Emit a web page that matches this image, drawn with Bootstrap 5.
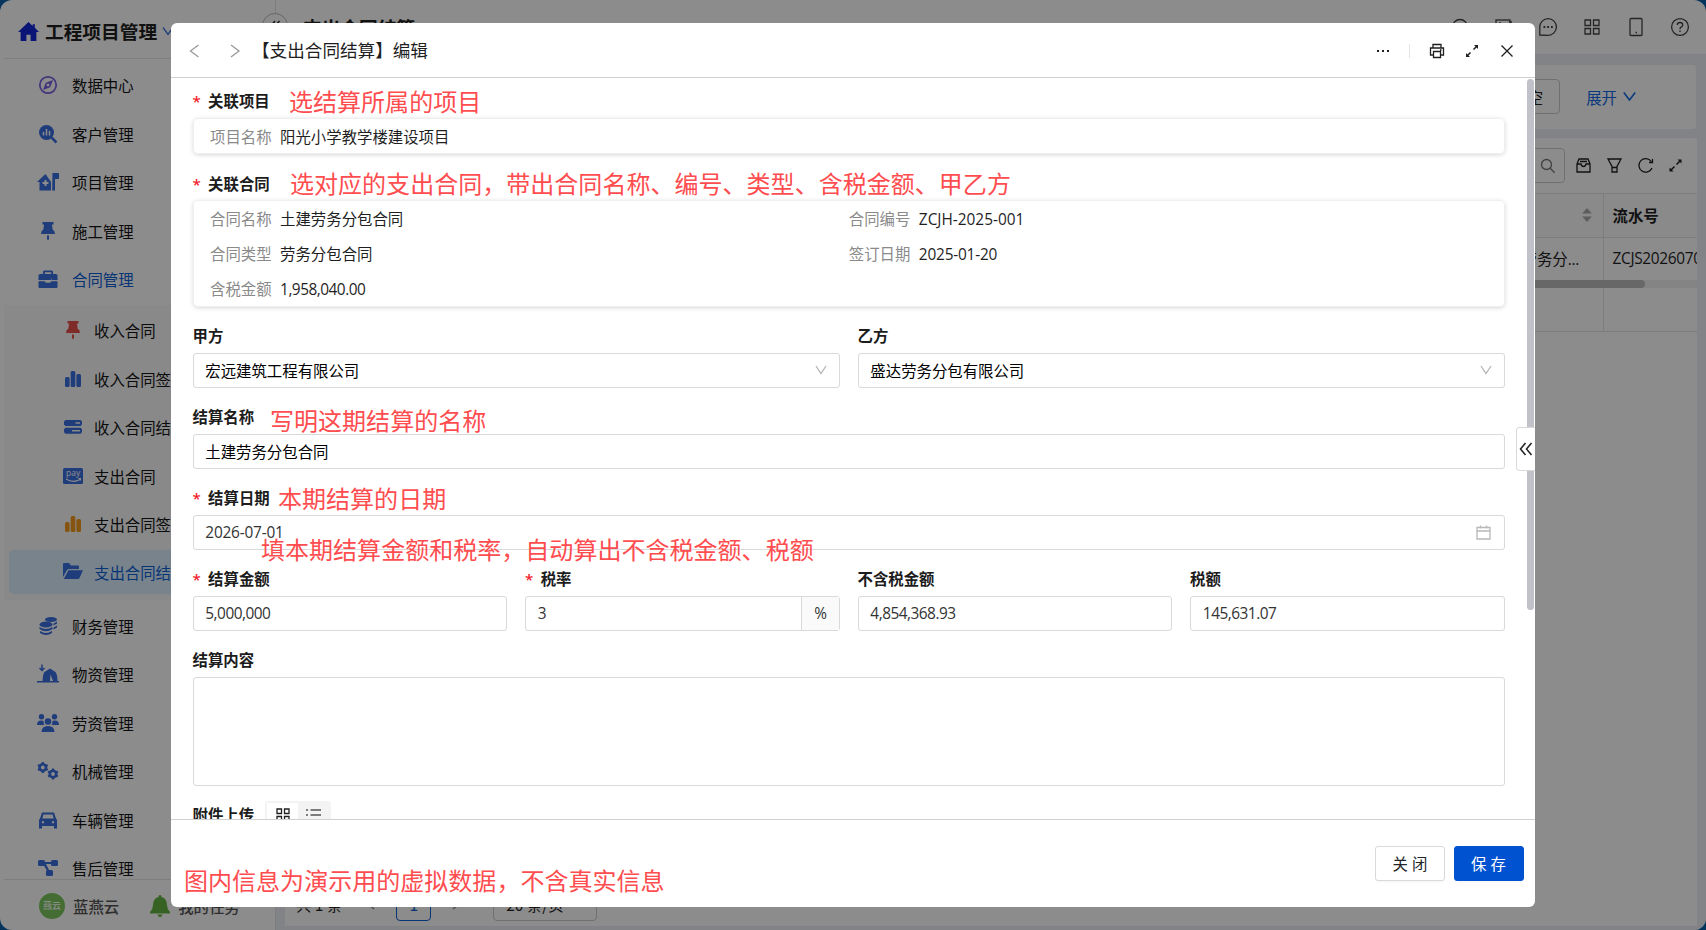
<!DOCTYPE html>
<html lang="zh-CN">
<head>
<meta charset="utf-8">
<meta name="viewport" content="width=device-width, initial-scale=1">
<title>工程项目管理</title>
<link href="https://cdn.jsdelivr.net/npm/bootstrap@5.3.0/dist/css/bootstrap.min.css" rel="stylesheet">
<style>
:root{--ui:"Open Sans","Noto Sans CJK SC",sans-serif}
html,body{height:100%}
body{margin:0;background:#0a5fa8;font-family:"Noto Sans CJK SC",sans-serif;font-size:15.4px;line-height:24px;color:#1f1f1f;overflow:hidden}
svg{display:block;flex:none;fill:none;stroke:currentColor;stroke-width:1.3}
svg.solid{fill:currentColor;stroke:none}
.lat{font-family:var(--ui);letter-spacing:-.5px}
.lat.date{letter-spacing:-.2px}
.lat.code{letter-spacing:0}
.app{height:930px;background:#fff;border-radius:12px;overflow:hidden}
.side{width:276px;border-right:1px solid #e4e4e8}
.brand{height:58.5px;border-bottom:1px solid #e6e6e6;margin-left:4px;padding:5px 0 0 14px;font-size:18.7px;font-weight:700;gap:6px}
.menu-list{height:820px;overflow:hidden;padding-top:2.500px}
.item{height:48.5px;padding-left:38px;gap:14px;color:#141414}
.item svg{width:20px;height:20px}
.blue{color:#3a6de0}
.submenu{background:#f9f9f9;margin:1.5px 0 2px 4px;padding:3.4px 0 0;height:294.5px}
.submenu .item{height:44px;margin:0 4px 4.4px 5px;padding-left:54px;gap:11px;border-radius:5px}
.submenu .item.sel{background:#dceffe;color:#0b5fd6}
.sidefoot{height:51px;border-top:1px solid #e6e6e6;margin-left:4px;padding:3px 0 0 35px;font-weight:500;color:#555}
.ava{width:26px;height:26px;border-radius:50%;background:#7ac75c;color:#fff;font-size:9px}
.topbar{height:54px;padding:0 16px 1px 27px}
.topbar .ttl{font-size:18.7px;font-weight:700}
.topicons{gap:24px;color:#444}
.topicons svg{width:20px;height:20px}
.fold{width:26px;height:26px;border:1px solid #bbb;border-radius:50%;left:262px;top:13px;background:#fff;z-index:1}
.work{background:#eceff5;height:876px;padding:11px 9px 4px 9px}
.filterbar{height:64px;margin-bottom:9px;background:#fff;border-radius:3px;padding-right:60px;margin-right:1px}
.ghost{border:1px solid #ccc;border-radius:4px;height:35px;background:#fff}
.filterbar .ghost{margin-bottom:1px}
.tbl{height:788px;background:#fff;position:relative}
.toolbar{height:55px;gap:12.4px;padding-right:13px}
.gridrow{border-top:1px solid #e4e4e4}
.gridrow>div:last-child{width:94px;border-left:1px solid #e4e4e4;padding-left:8.5px;overflow:hidden;white-space:nowrap}
.hbar{height:8px;background:#f0f0f0}
.hbar>div{height:8px;background:#bcbcbc;border-radius:4px;width:1360px}
.pager{margin-top:auto;height:35px;margin-bottom:5px;padding-left:11px}
.shade{inset:0;background:rgba(0,0,0,.45);z-index:5}
.dlg{left:171px;top:23px;width:1364px;height:884px;background:#fff;border-radius:6px;z-index:6;overflow:hidden}
.dlg-head{height:55px;border-bottom:1px solid #d0d0d0;padding:1px 20px 0 14px}
.dlg-title{font-size:17.6px;margin-left:8px;margin-top:-1px}
.dlg-body{height:741px;padding:7px 30px 0 21.5px;overflow:hidden}
.dlg-foot{height:88px;border-top:1px solid #d0d0d0;padding:0 11.5px 0 0;gap:8.5px}
.lbl{height:33px;line-height:31px;font-weight:600;font-size:15.4px;color:#1c1c1c;white-space:nowrap}
.req::before{content:"*";color:#f5222d;font-family:"Open Sans",sans-serif;font-weight:600;margin-right:7.4px;font-size:15px;letter-spacing:0}
.box1{border-radius:5px;border:1px solid #efefef;box-shadow:0 1px 4px rgba(0,0,0,.16);padding:0 16.5px;margin-bottom:13px}
.box1 .k{color:#8a8a8a;margin-right:8.500px}
.info>div{height:35.300px;overflow:hidden;line-height:34.400px}
.ant{height:35.3px;border:1px solid #d9d9d9;border-radius:3px;padding:0 11.8px;color:#000;margin-bottom:12.9px}
.ant.lat{color:#333}
.ant:not(.lat){padding-bottom:1px}
.fgrid{display:grid;column-gap:17.6px}
.g2{grid-template-columns:1fr 1fr}.g4{grid-template-columns:repeat(4,1fr)}
.pct{width:38px;height:33.3px;border-left:1px solid #d9d9d9;background:#fafafa;margin-right:-11.8px}
.seg{background:#f3f3f3;border-radius:3px;padding:2px;width:66px;height:32px;margin-top:2px}
.btn.x{height:35.2px;width:70px;padding:0;font-size:15.4px;border-radius:3px;letter-spacing:4px;text-indent:4px;border-color:#d9d9d9;box-shadow:0 2px 0 rgba(0,0,0,.02)}
.btn.x.p{background:#0052d0;border-color:#0052d0;color:#fff}
.note{color:#ff4d4f;font-size:24.04px;line-height:34px;white-space:nowrap;z-index:8}
.vbar{left:1356px;top:56px;width:7px;height:531px;border-radius:4px;background:#c1c2c9}
.pull{left:1345px;top:404px;width:20px;height:44px;background:#fff;border:1px solid #d9d9d9;border-radius:3px 0 0 3px}
</style>
</head>
<body>
<div class="app d-flex position-relative">
  <aside class="side flex-shrink-0">
    <div class="brand d-flex align-items-center">
      <svg class="solid" width="21" height="21" viewBox="0 0 20 20" style="color:#1527d8"><path d="M10 1 0 10.5h2.5V19H8v-6h4v6h5.5v-8.500H20L16 6.500V3h-2v1.800z"/></svg>
      <span>工程项目管理</span>
      <svg width="12" height="12" viewBox="0 0 12 12" class="blue" style="margin-left:-1px"><path d="m1 2.500 5 7 5-7"/></svg>
    </div>
    <div class="menu-list">
      <div class="item d-flex align-items-center"><svg viewBox="0 0 20 20" style="color:#7a5fe0"><circle cx="10" cy="10" r="8.200" stroke-width="1.700"/><path fill="currentColor" fill-rule="evenodd" stroke="none" d="m15 5-2.800 7.200L5 15l2.800-7.200zM10 8.600a1.400 1.400 0 1 0 .01 0z"/></svg>数据中心</div>
      <div class="item d-flex align-items-center"><svg class="blue" viewBox="0 0 20 20"><circle cx="8.500" cy="8.500" r="7.500" fill="currentColor" stroke="none"/><path d="m13.500 13.500 5 5" stroke-width="2.500"/><path d="M5.500 8v3.500M8.500 5v6.500M11.500 7v4.500" stroke="#fff" stroke-width="1.500"/></svg>客户管理</div>
      <div class="item d-flex align-items-center"><svg class="blue solid" viewBox="0 0 22 20" style="width:22px;height:20px;margin:0 -1px"><path fill-rule="evenodd" d="M8.500 2 0 10h2.500v8.500H14V10zM7.500 8h2v2h2v2h-2v2h-2v-2h-2v-2h2z"/><path d="M15.500 1H22v6h-4v11.500H15.200z"/></svg>项目管理</div>
      <div class="item d-flex align-items-center"><svg class="blue solid" viewBox="0 0 20 20"><path d="M4.500 1h11v2.500h-1.500l.6 5q2.400 1 2.400 4.500H3q0-3.500 2.400-4.500l.6-5H4.500zM9 14.500h2v3.500l-1 1.500-1-1.500z"/></svg>施工管理</div>
      <div class="item d-flex align-items-center" style="color:#0b5fd6"><svg class="blue solid" viewBox="0 0 20 20"><path fill-rule="evenodd" d="M6 1.500h8l1 1V5h3l1.500 1v5h-6V9.500H13v1.500H7V11H.5V6L2 5h3V2.500zM6.800 3.300V5h6.400V3.300z"/><path d="M.5 12.300h6l1.500 1.500h4l1.500-1.500h6V18q0 1-1 1H1.500q-1 0-1-1z"/></svg>合同管理</div>
      <div class="submenu">
        <div class="item d-flex align-items-center"><svg class="solid" style="color:#e8504c" viewBox="0 0 20 20"><path d="M4.500 1h11v2.500h-1.500l.6 5q2.400 1 2.400 4.500H3q0-3.500 2.400-4.500l.6-5H4.500zM9 14.500h2v3.500l-1 1.500-1-1.500z"/></svg>收入合同</div>
        <div class="item d-flex align-items-center"><svg class="blue solid" viewBox="0 0 20 20"><rect x="2" y="8" width="4.600" height="10" rx="1.500"/><rect x="7.700" y="2" width="4.600" height="16" rx="1.500"/><rect x="13.400" y="5" width="4.600" height="13" rx="1.500"/></svg>收入合同签</div>
        <div class="item d-flex align-items-center"><svg class="blue solid" viewBox="0 0 20 20"><path fill-rule="evenodd" d="M2.500 3h15L19 4.500v3L17.500 9h-15L1 7.500v-3zM12.500 5.200v1.600H17V5.200zM2.500 10.800h15l1.500 1.500v3l-1.500 1.500h-15L1 15.300v-3zM9 13v1.600h8V13z"/></svg>收入合同结</div>
        <div class="item d-flex align-items-center"><svg class="blue" viewBox="0 0 20 20"><rect x="0" y="2" width="20" height="16" rx="1.500" fill="currentColor" stroke="none"/><path d="M3 13q7 4.500 14 .5M15.500 12.500h2v2" stroke="#fff" stroke-width="1.100"/><text x="3" y="10" font-size="8.500" fill="#fff" stroke="none" font-family="Open Sans,sans-serif">pay</text></svg>支出合同</div>
        <div class="item d-flex align-items-center"><svg class="solid" style="color:#f39a1c" viewBox="0 0 20 20"><rect x="2" y="8" width="4.600" height="10" rx="1.500"/><rect x="7.700" y="2" width="4.600" height="16" rx="1.500"/><rect x="13.400" y="5" width="4.600" height="13" rx="1.500"/></svg>支出合同签</div>
        <div class="item sel d-flex align-items-center"><svg class="blue solid" viewBox="0 0 20 20"><path d="M0 2q0-1 1-1h5l2 2.500h7q1 0 1 1V7H6q-1.500 0-2 1L0 15zM5.500 8.200H20L16.500 16q-.5 1-1.500 1H.8z"/></svg>支出合同结</div>
      </div>
      <div class="item d-flex align-items-center"><svg class="blue solid" viewBox="0 0 20 20"><ellipse cx="13" cy="3.500" rx="6" ry="2.600"/><ellipse cx="8" cy="8.500" rx="6.500" ry="3"/><path d="M1.500 11q6.500 4 13 0v2q-6.500 4.500-13 0zM2 15q6 4 12 0v2q-6 4-12 0zM15.500 7.500 19 5.500v2l-3.500 2zM15.500 11.500 19 9.500v2l-3.500 2z"/></svg>财务管理</div>
      <div class="item d-flex align-items-center"><svg class="blue" viewBox="-1 0 22 20" style="width:22px;height:20px;margin:0 -1px"><path d="M4 .5v6M1.500 4 4 6.500 6.500 4" stroke-width="1.500"/><path fill="currentColor" stroke="none" fill-rule="evenodd" d="M-1 17h5.500Q5 9 6.500 8L12 4.500 17.500 8q2 3 2 9H21v1.500H-1zM12.500 10.500 12 17h3z"/></svg>物资管理</div>
      <div class="item d-flex align-items-center"><svg class="blue solid" viewBox="-1 0 22 20" style="width:22px;height:20px;margin:0 -1px"><circle cx="3.500" cy="3.700" r="2.700"/><circle cx="16.500" cy="3.700" r="2.700"/><circle cx="10" cy="8.500" r="3.300"/><path d="M-1 12q0-4.500 4-4.500 2.500 0 2.700 1-.4 2 .8 3.500zM21 12q0-4.500-4-4.500-2.500 0-2.700 1 .4 2-.8 3.500zM3.500 19q0-6 6.500-6t6.500 6z"/></svg>劳资管理</div>
      <div class="item d-flex align-items-center"><svg class="blue" viewBox="-1 0 22 20" style="width:22px;height:20px;margin:0 -1px"><g stroke-width="2.600"><circle cx="4.800" cy="6.500" r="3.200"/><circle cx="15" cy="13" r="3.200"/></g><g stroke-width="2.200"><path d="M4.800 1v2M4.800 10v2M0 4l1.800 1M8 8l1.700 1M0 9l1.800-1M8 5l1.700-1M15 7.500v2M15 16.500v2M10.200 10.500l1.800 1M18 14.500l1.800 1M10.200 15.500l1.800-1M18 11.500l1.800-1"/></g></svg>机械管理</div>
      <div class="item d-flex align-items-center"><svg class="blue solid" viewBox="0 0 20 20"><path fill-rule="evenodd" d="M4 2.500h12l2 6 1 1.500v8.500h-3v-2.500H4v2.500H1V10l1-1.500zM5.500 4.500 4.300 8.500h11.400l-1.200-4zM5 11a1.200 1.200 0 1 0 .01 0zM15 11a1.200 1.200 0 1 0 .01 0z"/></svg>车辆管理</div>
      <div class="item d-flex align-items-center"><svg class="blue solid" viewBox="0 0 20 20"><rect x="0" y="2" width="7" height="6" rx="1.500"/><rect x="13" y="2" width="7" height="6" rx="1.500"/><rect x="8" y="12" width="7" height="6" rx="1.500"/><path d="M5 4h10v2H8l3.500 7-2 .5L5 6z"/></svg>售后管理</div>
    </div>
    <div class="sidefoot d-flex align-items-center">
      <div class="ava d-flex align-items-center justify-content-center">燕云</div><span style="margin-left:8px">蓝燕云</span>
      <svg class="solid" width="20" height="22" viewBox="0 0 20 22" style="color:#63b540;margin:0 8px 0 31px"><path d="M10 0q1.500 0 1.500 2Q17 3.500 17 10q0 4 3 7v1.500H0V17q3-3 3-7 0-6.500 5.500-8Q8.500 0 10 0zM7.500 19.500h5q-.5 2.500-2.500 2.500t-2.500-2.500z"/></svg>
      <span>我的任务</span>
    </div>
  </aside>
  <div class="fold position-absolute d-flex align-items-center justify-content-center"><svg width="12" height="12" viewBox="0 0 12 12"><path d="M6 1 1.500 6 6 11M10.500 1 6 6l4.500 5"/></svg></div>
  <main class="flex-grow-1" style="min-width:0">
    <div class="topbar d-flex align-items-center justify-content-between">
      <span class="ttl">支出合同结算</span>
      <div class="topicons d-flex">
        <svg viewBox="0 0 20 20"><circle cx="10" cy="10" r="7.500"/></svg>
        <svg viewBox="0 0 20 20"><rect x="2" y="3" width="14" height="14"/><path d="M5 6h2M15 5h3"/></svg>
        <svg viewBox="0 0 20 20"><path d="M1.800 18V10a8.300 8.300 0 1 1 8.300 8.300z"/><path d="M5.500 10h1.800M9.200 10H11M13 10h1.800" stroke-width="1.800"/></svg>
        <svg viewBox="0 0 20 20"><path d="M3 3h5.500v5.500H3zM11.500 3H17v5.500h-5.500zM3 11.500h5.500V17H3zM11.500 11.500H17V17h-5.500z"/></svg>
        <svg viewBox="0 0 20 20"><rect x="4" y="1.500" width="12" height="17" rx="1"/><path d="M9.500 15.500h1.500" stroke-width="1.600"/></svg>
        <svg viewBox="0 0 20 20"><circle cx="10" cy="10" r="8.400"/><path d="M7.300 8q0-2.500 2.700-2.500T12.700 8q0 1.500-1.700 2.200-1 .5-1 2M10 13.500v1.500"/></svg>
      </div>
    </div>
    <div class="work">
      <div class="filterbar d-flex align-items-center justify-content-end">
        <div class="ghost d-flex align-items-center px-3">清 空</div>
        <span style="color:#1268e8;margin:-1px 0 0 26px">展开</span>
        <svg width="13" height="13" viewBox="0 0 13 13" style="color:#1268e8;margin:-2px 0 0 6px;stroke-width:1.600"><path d="m.8 2.500 5.700 7.500 5.700-7.500"/></svg>
      </div>
      <div class="tbl d-flex flex-column">
        <div class="toolbar d-flex align-items-center justify-content-end">
          <div class="ghost d-flex align-items-center justify-content-end" style="width:220px;padding-right:8px;margin-right:-2.500px;color:#777"><svg width="16" height="16" viewBox="0 0 16 16"><circle cx="6.500" cy="6.500" r="5"/><path d="m10.200 10.200 4.500 4.500"/></svg></div>
          <svg width="17" height="17" viewBox="0 0 17 17" stroke-width="1.600"><path d="M2 7 4 2h9l2 5v8H2zM2 7h4q.5 2.500 2.500 2.500T11 7h4M5 4.500h7"/></svg>
          <svg width="17" height="17" viewBox="0 0 17 17" stroke-width="1.500" style="margin-left:2px"><path d="M2 2h13l-4 7.500V15H6V9.500zM6 10.500h5"/></svg>
          <svg width="17" height="17" viewBox="0 0 17 17" stroke-width="1.500" style="margin-left:1px"><path d="M14.300 4.500A6.800 6.800 0 1 0 15 11M15.500 2v3.500H12"/></svg>
          <svg width="17" height="17" viewBox="0 0 17 17" style="margin-left:1px"><path d="m4 13 3.500-3.500M9.500 7.500 13 4" stroke-width="1.500"/><path d="M10.500 2.500h4v4zM2.500 10.500v4h4z" fill="currentColor" stroke="none"/></svg>
        </div>
        <div class="gridrow d-flex align-items-center" style="height:43.500px;background:#fbfbfb"><div class="flex-grow-1 d-flex justify-content-end" style="padding-right:11px"><svg class="solid" width="10" height="14" viewBox="0 0 10 14" style="color:#aaa"><path d="m5 0 4.800 5.500H.2zM5 14 .2 8.500h9.600z"/></svg></div><div class="fw-bold h-100 d-flex align-items-center">流水号</div></div>
        <div class="gridrow d-flex align-items-center" style="height:43px"><div class="flex-grow-1 text-end" style="padding-right:24px">土建劳务分<span style="letter-spacing:-.3px;font-family:'Open Sans',sans-serif">...</span></div><div class="lat h-100 d-flex align-items-center" style="letter-spacing:-.3px">ZCJS20260701001</div></div>
        <div class="hbar"><div></div></div>
        <div class="gridrow d-flex border-bottom border-top-0" style="height:44px"><div class="flex-grow-1"></div><div></div></div>
        <div class="pager d-flex align-items-center">
          <span>共 1 条</span>
          <svg width="9" height="12" viewBox="0 0 9 12" style="margin-left:24px;color:#888"><path d="M8 1 2 6l6 5"/></svg>
          <div class="ghost d-flex align-items-center justify-content-center" style="width:35px;margin-left:21px;border-color:#0b5fd6;color:#0b5fd6">1</div>
          <svg width="9" height="12" viewBox="0 0 9 12" style="margin-left:21px;color:#888"><path d="m1 1 6 5-6 5"/></svg>
          <div class="ghost d-flex align-items-center" style="width:104px;margin-left:32px;padding-left:12px">20 条/页</div>
        </div>
      </div>
    </div>
  </main>
</div>
<div class="shade position-fixed"></div>
<section class="dlg position-absolute" role="dialog">
  <header class="dlg-head d-flex align-items-center">
    <svg width="18" height="14" viewBox="0 0 18 14" style="color:#999"><path d="M13.500 1 5.500 7l8 6"/></svg>
    <svg width="18" height="14" viewBox="0 0 18 14" style="color:#999;margin-left:23px"><path d="m5 1 8 6-8 6"/></svg>
    <span class="dlg-title">【支出合同结算】编辑</span>
    <svg class="solid ms-auto" width="14" height="4" viewBox="0 0 14 4"><path d="M1 1h2v2H1zM6 1h2v2H6zM11 1h2v2h-2z"/></svg>
    <div style="width:1px;height:14px;background:#e4e4e4;margin:0 19px"></div>
    <svg width="16" height="16" viewBox="0 0 16 16" stroke-width="1.400"><path d="M4 5V1.500h8V5M4 12H1.500V5h13v7H12M4.500 8.500h7v6h-7zM11 7h1.500"/></svg>
    <svg width="16" height="16" viewBox="0 0 16 16" style="margin-left:19px"><path d="m3 13 3.500-3.500M9.500 6.500 13 3" stroke-width="1.500"/><path d="M10 2h4v4zM2 10v4h4z" fill="currentColor" stroke="none"/></svg>
    <svg width="14" height="14" viewBox="0 0 14 14" stroke-width="1.600" style="margin:0 1px 0 20px"><path d="m1.500 1.500 11 11M12.500 1.500l-11 11"/></svg>
  </header>
  <div class="dlg-body">
    <div class="lbl req">关联项目</div>
    <div class="box1 d-flex align-items-center" style="height:35.500px"><span class="k">项目名称</span>阳光小学教学楼建设项目</div>
    <div class="lbl req" style="line-height:32px">关联合同</div>
    <div class="box1 info row g-0 align-content-start" style="height:107px">
      <div class="col-6"><span class="k">合同名称</span>土建劳务分包合同</div><div class="col-6"><span class="k">合同编号</span><span class="lat code">ZCJH-2025-001</span></div>
      <div class="col-6"><span class="k">合同类型</span>劳务分包合同</div><div class="col-6"><span class="k">签订日期</span><span class="lat date">2025-01-20</span></div>
      <div class="col-6"><span class="k">含税金额</span><span class="lat">1,958,040.00</span></div>
    </div>
    <div class="fgrid g2">
      <div><div class="lbl">甲方</div><div class="ant d-flex align-items-center justify-content-between">宏远建筑工程有限公司<svg width="12" height="12" viewBox="0 0 12 12" style="color:#b5b5b5"><path d="m1 2 5 7.500L11 2"/></svg></div></div>
      <div><div class="lbl">乙方</div><div class="ant d-flex align-items-center justify-content-between">盛达劳务分包有限公司<svg width="12" height="12" viewBox="0 0 12 12" style="color:#b5b5b5"><path d="m1 2 5 7.500L11 2"/></svg></div></div>
    </div>
    <div class="lbl">结算名称</div><div class="ant d-flex align-items-center">土建劳务分包合同</div>
    <div class="lbl req">结算日期</div><div class="ant lat date d-flex align-items-center justify-content-between">2026-07-01<svg width="15" height="15" viewBox="0 0 15 15" style="color:#b8b8b8;margin-right:1px"><path d="M1 2.500h13v11.500H1zM1 6h13M4.500 .5v3M10.500 .5v3"/></svg></div>
    <div class="fgrid g4">
      <div><div class="lbl req">结算金额</div><div class="ant lat d-flex align-items-center">5,000,000</div></div>
      <div><div class="lbl req">税率</div><div class="ant lat d-flex align-items-center justify-content-between">3<div class="pct d-flex align-items-center justify-content-center">%</div></div></div>
      <div><div class="lbl">不含税金额</div><div class="ant lat d-flex align-items-center">4,854,368.93</div></div>
      <div><div class="lbl">税额</div><div class="ant lat d-flex align-items-center">145,631.07</div></div>
    </div>
    <div class="lbl">结算内容</div><div class="ant" style="height:108.500px"></div>
    <div class="d-flex"><div class="lbl">附件上传</div><div class="seg d-flex" style="margin-left:11px">
      <div class="bg-white d-flex justify-content-center" style="width:31px;padding-top:5px"><svg width="14" height="14" viewBox="0 0 14 14"><path d="M1 1h4.500v4.500H1zM8.500 1H13v4.500H8.500zM1 8.500h4.500V13H1zM8.500 8.500H13V13H8.500z"/></svg></div>
      <div class="d-flex justify-content-center" style="width:31px;padding-top:5px;color:#555"><svg width="15" height="14" viewBox="0 0 15 14"><path d="M0 2h2M4.500 2H15M0 7h2M4.500 7H15M0 12h2M4.500 12H15"/></svg></div>
    </div></div>
  </div>
  <footer class="dlg-foot d-flex align-items-center justify-content-end">
    <button class="btn x bg-white">关闭</button><button class="btn x p">保存</button>
  </footer>
  <div class="vbar position-absolute"></div>
  <div class="pull position-absolute d-flex align-items-center justify-content-center"><svg width="14" height="14" viewBox="0 0 14 14" style="stroke-width:1.500"><path d="M6.500 1 1.500 7l5 6M12.500 1l-5 6 5 6"/></svg></div>
</section>
<div class="note position-absolute" style="left:289px;top:84px">选结算所属的项目</div>
<div class="note position-absolute" style="left:290px;top:166px">选对应的支出合同，带出合同名称、编号、类型、含税金额、甲乙方</div>
<div class="note position-absolute" style="left:270px;top:403px">写明这期结算的名称</div>
<div class="note position-absolute" style="left:278px;top:481px">本期结算的日期</div>
<div class="note position-absolute" style="left:261px;top:532px">填本期结算金额和税率，自动算出不含税金额、税额</div>
<div class="note position-absolute" style="left:184px;top:863px">图内信息为演示用的虚拟数据，不含真实信息</div>
<script src="https://cdn.jsdelivr.net/npm/bootstrap@5.3.0/dist/js/bootstrap.bundle.min.js"></script>
</body>
</html>
